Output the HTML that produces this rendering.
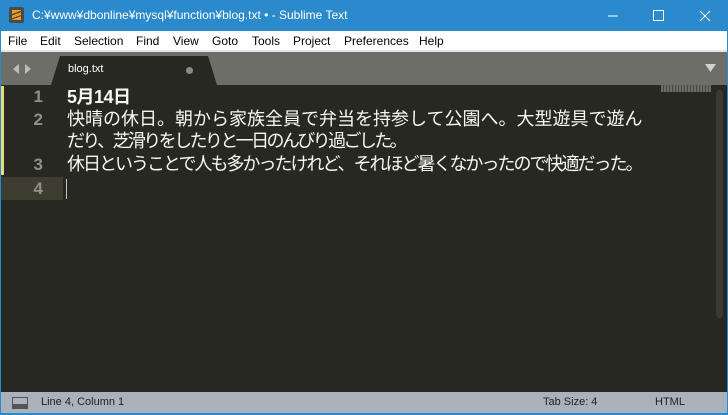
<!DOCTYPE html>
<html><head><meta charset="utf-8"><style>
*{margin:0;padding:0;box-sizing:border-box}
body{width:728px;height:415px;overflow:hidden;background:#2b8acb;font-family:"Liberation Sans","Noto Sans CJK JP",sans-serif;position:relative}
.title{position:absolute;left:0;top:0;width:728px;height:31px;background:#2b8acb;color:#fff;font-size:12px}
.title .t{position:absolute;left:32px;top:8px}
.logo{position:absolute;left:9px;top:7px;width:15px;height:16px;background:#4a4a4a;border-radius:2px}
.logo:after{content:"";position:absolute;left:3px;top:3px;width:9px;height:10px;background:linear-gradient(160deg,#f29a1c 0 30%,transparent 30% 42%,#f29a1c 42% 62%,transparent 62% 72%,#f29a1c 72%)}
.menu{position:absolute;left:1px;top:31px;width:726px;height:19px;background:#fff;font-size:12px;color:#000}
.menu span{position:absolute;top:3px}
.strip{position:absolute;left:1px;top:50px;width:726px;height:2px;background:#e6e6e6}
.tabs{position:absolute;left:1px;top:52px;width:726px;height:33px;background:#6e6e69}
.tab{position:absolute;left:50px;top:4px;width:166px;height:29px;background:#272822;clip-path:polygon(0 100%,9px 0,157px 0,166px 100%)}
.tab span{position:absolute;left:17px;top:7px;color:#fff;font-size:11px}
.editor{position:absolute;left:1px;top:85px;width:726px;height:307px;background:#272822}
.mark{position:absolute;left:0;top:1px;width:3px;height:89px;background:#e6db74}
.hl{position:absolute;left:0;top:92px;width:62px;height:23px;background:#3e3d32}
.caret{position:absolute;left:65px;top:94px;width:1px;height:20px;background:#c0c0c0}
.ln{position:absolute;left:0;width:42px;text-align:right;color:#90908a;font-size:17px;font-weight:bold}
.txt{position:absolute;left:66px;color:#f8f8f2;font-size:18px;white-space:nowrap;line-height:22px}
.status{position:absolute;left:1px;top:392px;width:726px;height:21px;background:#a9b1ba;font-size:11px;color:#222}
.status span{position:absolute;top:4px}
.sb{position:absolute;left:715px;top:5px;width:7px;height:228px;background:#3a3a35;border-radius:3px}
</style></head><body>
<div class="title"><div class="logo"></div><span class="t">C:¥www¥dbonline¥mysql¥function¥blog.txt • - Sublime Text</span>
<svg style="position:absolute;left:600px;top:8px" width="120" height="16"><line x1="8" y1="8" x2="18" y2="8" stroke="#fff"/><rect x="53.5" y="2.5" width="10" height="10" fill="none" stroke="#fff"/><path d="M100 3L110 13M110 3L100 13" stroke="#fff"/></svg></div>
<div class="menu"><span style="left:7px">File</span><span style="left:39px">Edit</span><span style="left:73px">Selection</span><span style="left:135px">Find</span><span style="left:172px">View</span><span style="left:211px">Goto</span><span style="left:251px">Tools</span><span style="left:292px">Project</span><span style="left:343px">Preferences</span><span style="left:418px">Help</span></div>
<div class="strip"></div>
<div class="tabs">
<svg style="position:absolute;left:10px;top:11px" width="26" height="12"><path d="M8 1L2 6L8 11Z" fill="#bdbdb8"/><path d="M14 1L20 6L14 11Z" fill="#bdbdb8"/></svg>
<div class="tab"><span>blog.txt</span><i style="position:absolute;left:135px;top:11px;width:7px;height:7px;border-radius:50%;background:#8a8a85"></i></div>
<svg style="position:absolute;left:704px;top:12px" width="12" height="9"><path d="M0 0H11L5.5 8Z" fill="#d0d0cc"/></svg>
</div>
<div class="editor">
<div class="mark"></div><div class="hl"></div>
<div class="ln" style="top:2px">1</div><div class="ln" style="top:25px">2</div><div class="ln" style="top:70px">3</div><div class="ln" style="top:94px">4</div>
<div class="txt" style="top:1px;font-weight:bold;letter-spacing:-0.5px">5月14日</div>
<div class="txt" style="top:23px;letter-spacing:0px">快晴の休日。朝から家族全員で弁当を持参して公園へ。大型遊具で遊ん</div>
<div class="txt" style="top:45px;letter-spacing:-2.6px">だり、芝滑りをしたりと一日のんびり過ごした。</div>
<div class="txt" style="top:68px;letter-spacing:-2px">休日ということで人も多かったけれど、それほど暑くなかったので快適だった。</div>
<div class="caret"></div>
<div style="position:absolute;left:660px;top:0;width:50px;height:7px;background:repeating-linear-gradient(90deg,#8a8a84 0 2px,#55554f 2px 3px);opacity:.7"></div>
<div class="sb"></div>
</div>
<div class="status"><svg style="position:absolute;left:11px;top:5px" width="16" height="12"><rect x="0.5" y="0.5" width="15" height="11" fill="none" stroke="#555"/><rect x="0" y="7" width="16" height="5" fill="#555"/></svg><span style="left:40px">Line 4, Column 1</span><span style="left:542px">Tab Size: 4</span><span style="left:654px">HTML</span></div>
</body></html>
